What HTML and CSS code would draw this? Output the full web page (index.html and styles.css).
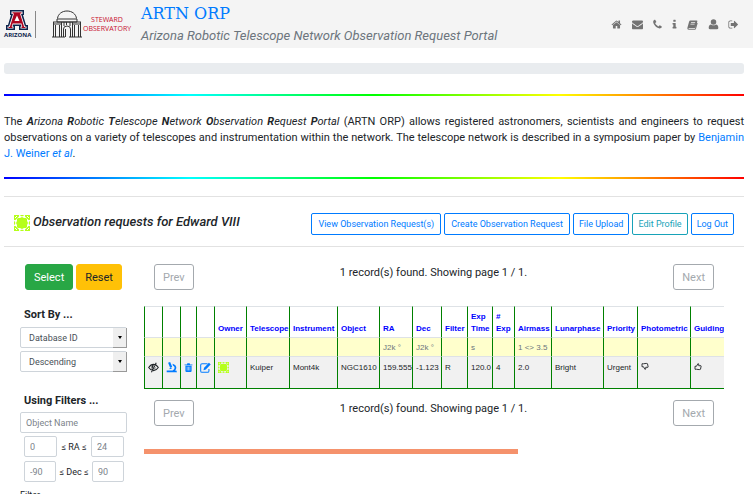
FILE: index.html
```html
<!DOCTYPE html>
<html lang="en">
<head>
<meta charset="utf-8">
<title>ARTN ORP</title>
<link rel="stylesheet" href="styles.css">
</head>
<body>
<svg class="defs" aria-hidden="true">
  <symbol id="identicon" viewBox="0 0 16 16">
    <path fill="#b5ff1a" d="M0 0h5v1.500L1.500 5H0zM16 0h-5v1.500L14.500 5H16zM0 16h5v-1.500L1.500 11H0zM16 16h-5v-1.500l3.500-3.500H16zM5.500 0L8 1.500 10.500 0zM5.500 16L8 14.500l2.500 1.500zM0 5.500L1.500 8 0 10.500zM16 5.500L14.500 8l1.500 2.500z"/>
    <path fill="#b5ff1a" d="M8 2l2 1h2l1 1v2l1 2-1 2v2l-1 1h-2l-2 1-2-1H4l-1-1v-2L2 8l1-2V4l1-1h2z"/>
    <path fill="#fff" d="M1 2h1v1H1zM2 1h1v1H2zM13 1h1v1h-1zM14 2h1v1h-1zM1 13h1v1H1zM2 14h1v1H2zM13 14h1v1h-1zM14 13h1v1h-1z"/>
  </symbol>
</svg>
<header class="top">
  <svg class="logo-a" viewBox="0 0 26 28" role="img" aria-label="Arizona">
    <path fill="#0c234b" d="M6 0h14v5h-1l3 10h2v5h-9v-4h-4v4H2v-5h2L7 5H6z"/>
    <path fill="#fff" d="M7.500 1.500h11v2.500h-1.500l4 12.500h1.500v2h-6v-2h1l-.5-2h-8l-.5 2h1v2h-6v-2H5L9 4H7.500z"/>
    <path fill="#ab0520" d="M8.500 2.200h9v1.400H16l4.200 13.400h1.300v1h-4v-1h.8l-.9-3.500H8.600L7.700 17h.8v1h-4v-1h1.300L10 3.600H8.500zM13 5.500L10.500 11h5z"/>
    <text x="0" y="27" class="logo-word" fill="#0c234b">ARIZONA</text>
  </svg>
  <span class="rule"></span>
  <svg class="dome" viewBox="0 0 30 28" fill="none" stroke="#333" stroke-width="1" aria-hidden="true">
    <path d="M5.500 8.500C6 4 10 1 15 1s9 3 9.500 7.500M5 9h20v3H5zM1 12h28M1 14h8M21 14h8M1.500 12v15M3.500 15v12M7.500 15v12M9.500 12v15M20.500 12v15M22.500 15v12M26.500 15v12M28.500 12v15M0 27h10M20 27h10M11.500 27v-8q0-3 3.500-3t3.500 3v8M13.500 19v8M10 27h3M17 27h3M12 12v4M18 12v4M14.500 12v3"/>
  </svg>
  <span class="steward">STEWARD<br>OBSERVATORY</span>
  <div class="brand">
    <a href="#" class="brand-name">ARTN ORP</a>
    <em class="brand-sub">Arizona Robotic Telescope Network Observation Request Portal</em>
  </div>
  <nav class="icons">
    <a href="#" aria-label="Home"><svg viewBox="0 0 1792 1792"><path d="M1472 992v480q0 26-19 45t-45 19h-384v-384h-256v384h-384q-26 0-45-19t-19-45v-480q0-1 .5-3t.5-3l575-474 575 474q1 2 1 6zm223-69l-62 74q-8 9-21 11h-3q-13 0-21-7l-692-577-692 577q-12 8-24 7-13-2-21-11l-62-74q-8-10-7-23.500t11-21.500l719-599q32-26 76-26t76 26l244 204v-195q0-14 9-23t23-9h192q14 0 23 9t9 23v408l219 182q10 8 11 21.500t-7 23.500z"/></svg></a>
    <a href="#" aria-label="Mail"><svg viewBox="0 0 1792 1792"><path d="M1792 710v794q0 66-47 113t-113 47h-1472q-66 0-113-47t-47-113v-794q44 49 101 87 362 246 497 345 57 42 92.500 65.500t94.500 48 110 24.500h2q51 0 110-24.500t94.500-48 92.500-65.500q170-123 498-345 57-39 100-87zm0-294q0 79-49 151t-122 123q-376 261-468 325-10 7-42.500 31t-54 38.500-52 32.500-57.500 27-50 9h-2q-23 0-50-9t-57.500-27-52-32.500-54-38.500-42.500-31q-91-64-262-182.500t-205-142.500q-62-42-117-115.500t-55-136.500q0-78 41.500-130t118.500-52h1472q65 0 112.500 47t47.500 113z"/></svg></a>
    <a href="#" aria-label="Phone" class="narrow"><svg viewBox="0 0 1792 1792"><path d="M1600 1240q0 27-10 70.500t-21 68.500q-21 50-122 106-94 51-186 51-27 0-52.500-3.500t-57.500-12.500-47.500-14.500-55.500-20.500-49-18q-98-35-175-83-128-79-264.500-215.500t-215.500-264.500q-48-77-83-175-3-9-18-49t-20.500-55.500-14.500-47.500-12.500-57.500-3.500-52.500q0-92 51-186 56-101 106-122 25-11 68.500-21t70.500-10q14 0 21 3 18 6 53 76 11 19 30 54t35 63.500 31 53.500q3 4 17.500 25t21.500 35.500 7 28.500q0 20-28.500 50t-62 55-62 53-28.500 46q0 9 5 22.500t8.500 20.500 14 24 11.500 19q76 137 174 235t235 174q2 1 19 11.500t24 14 20.500 8.500 22.500 5q18 0 46-28.500t53-62 55-62 50-28.500q14 0 28.500 7t35.500 21.500 25 17.500q25 15 53.500 31t63.500 35 54 30q70 35 76 53 3 7 3 21z"/></svg></a>
    <a href="#" aria-label="Info" class="thin"><svg viewBox="0 0 1792 1792"><path d="M1216 1344v128q0 26-19 45t-45 19h-512q-26 0-45-19t-19-45v-128q0-26 19-45t45-19h64v-384h-64q-26 0-45-19t-19-45v-128q0-26 19-45t45-19h384q26 0 45 19t19 45v576h64q26 0 45 19t19 45zm-128-1152v192q0 26-19 45t-45 19h-256q-26 0-45-19t-19-45v-192q0-26 19-45t45-19h256q26 0 45 19t19 45z"/></svg></a>
    <a href="#" aria-label="Manual"><svg viewBox="0 0 16 16"><path fill-rule="evenodd" d="M5 2h9q1.500 0 1 1.500l-2.500 8.500q-.4 1-1.500 1H3q-1 0-1 .7t1 .6h8.700l2.800-9 1 .8L13 14.500q-.4 1-1.500 1H2.500Q0 15.500.5 13L3 4q.5-2 2-2zm1 2.500l-.3 1h6l.3-1zm-.8 2.500l-.3 1h6l.3-1z"/></svg></a>
    <a href="#" aria-label="User"><svg viewBox="0 0 16 16"><circle cx="8" cy="4.500" r="4"/><path d="M4.500 8Q8 10.500 11.500 8 15 8.500 15 13q0 2-2 2H3q-2 0-2-2 0-4.500 3.500-5z"/></svg></a>
    <a href="#" aria-label="Sign out" class="narrow"><svg viewBox="0 0 1792 1792"><path d="M704 1440q0 4 1 20t.5 26.500-3 23.500-10 19.500-20.500 6.500h-320q-119 0-203.500-84.500t-84.500-203.500v-704q0-119 84.500-203.500t203.500-84.500h320q13 0 22.500 9.500t9.500 22.500q0 4 1 20t.5 26.500-3 23.500-10 19.500-20.500 6.500h-320q-66 0-113 47t-47 113v704q0 66 47 113t113 47h312l11.500 1 11.500 3 8 5.500 7 9 2 13.500zm928-544q0 26-19 45l-544 544q-19 19-45 19t-45-19-19-45v-288h-448q-26 0-45-19t-19-45v-384q0-26 19-45t45-19h448v-288q0-26 19-45t45-19 45 19l544 544q19 19 19 45z"/></svg></a>
  </nav>
</header>
<main>
  <div class="bar"></div>
  <div class="rainbow"></div>
  <p class="intro">The <em><b>A</b>rizona <b>R</b>obotic <b>T</b>elescope <b>N</b>etwork <b>O</b>bservation <b>R</b>equest <b>P</b>ortal</em> (ARTN ORP) allows registered astronomers, scientists and engineers to request observations on a variety of telescopes and instrumentation within the network. The telescope network is described in a symposium paper by <a href="#">Benjamin J. Weiner <em>et al</em></a>.</p>
  <div class="rainbow"></div>
  <section class="heading">
    <svg class="avatar"><use href="#identicon"/></svg>
    <h1>Observation requests for Edward VIII</h1>
    <div class="actions">
      <button type="button" class="roomy">View Observation Request(s)</button>
      <button type="button" class="roomy">Create Observation Request</button>
      <button type="button">File Upload</button>
      <button type="button" class="teal">Edit Profile</button>
      <button type="button">Log Out</button>
    </div>
  </section>
  <div class="columns">
    <form class="side">
      <div class="submit">
        <button type="button" class="btn green">Select</button>
        <button type="reset" class="btn amber">Reset</button>
      </div>
      <h2>Sort By ...</h2>
      <div class="pick"><select aria-label="Sort field"><option>Database ID</option></select></div>
      <div class="pick"><select aria-label="Sort order"><option>Descending</option></select></div>
      <h2 class="second">Using Filters ...</h2>
      <input class="field" type="text" aria-label="Object name" placeholder="Object Name">
      <div class="range">
        <input class="field" type="text" aria-label="Minimum RA" placeholder="0"><span>≤ RA ≤</span><input class="field" type="text" aria-label="Maximum RA" placeholder="24">
      </div>
      <div class="range dec">
        <input class="field" type="text" aria-label="Minimum Dec" placeholder="-90"><span>≤ Dec ≤</span><input class="field" type="text" aria-label="Maximum Dec" placeholder="90">
      </div>
      <p class="label">Filter</p>
    </form>
    <section class="results">
      <div class="pager">
        <button type="button" class="btn grey" disabled>Prev</button>
        <span>1 record(s) found. Showing page 1 / 1.</span>
        <button type="button" class="btn grey" disabled>Next</button>
      </div>
      <div class="scroll">
        <table>
          <colgroup>
            <col class="w18"><col class="w18"><col class="w16"><col class="w18"><col class="w32"><col class="w43"><col class="w48"><col class="w42"><col class="w33"><col class="w29"><col class="w26"><col class="w25"><col class="w22"><col class="w37"><col class="w52"><col class="w34"><col class="w53"><col class="w48">
          </colgroup>
          <thead>
            <tr><th></th><th></th><th></th><th></th><th>Owner</th><th>Telescope</th><th>Instrument</th><th>Object</th><th>RA</th><th>Dec</th><th>Filter</th><th>Exp<br>Time</th><th>#<br>Exp</th><th>Airmass</th><th>Lunarphase</th><th>Priority</th><th>Photometric</th><th>Guiding</th></tr>
          </thead>
          <tbody>
            <tr class="units"><td></td><td></td><td></td><td></td><td></td><td></td><td></td><td></td><td>J2k °</td><td>J2k °</td><td></td><td>s</td><td></td><td>1 &lt;&gt; 3.5</td><td></td><td></td><td></td><td></td></tr>
            <tr class="record">
              <td><svg class="ic dark" viewBox="0 0 16 16"><path fill="none" stroke="currentColor" stroke-width="1.600" d="M1 8q3-4.500 7-4.500T15 8q-3 4.500-7 4.500T1 8zM12 1L5 15"/><path fill="currentColor" d="M5 7q0-3 3.500-3L6 11q-1-1-1-4zM11 7l-2.500 4q3-1 2.500-4z"/></svg></td>
              <td><svg class="ic" viewBox="0 0 16 16"><path fill="currentColor" d="M3 1l3-1 3 7-3 1.500zM5 9l3-1 .5 1.500-3 1zM9.500 2.500Q15 4 15 8.500 15 11 13 12.500h2l1 2.500H1v-2.500h8.500q3-1.500 3-4t-2.500-3.500z"/></svg></td>
              <td><svg class="ic slim" viewBox="0 0 16 16"><path fill="currentColor" fill-rule="evenodd" d="M1 2.500h4L6 .5h4l1 2h4V4H1zM2.500 5h11v9q0 2-2 2h-7q-2 0-2-2zM5 6.500v7h1v-7zm2.500 0v7h1v-7zm2.500 0v7h1v-7z"/></svg></td>
              <td><svg class="ic" viewBox="0 0 16 16"><path fill="none" stroke="currentColor" stroke-width="1.500" d="M11 2.500H3q-2 0-2 2V13q0 2 2 2h8q2 0 2-2v-3"/><path fill="currentColor" d="M13 1l2.500 2.500L8.500 11 5 12l1-3.500z"/></svg></td>
              <td><svg class="ic"><use href="#identicon"/></svg></td>
              <td>Kuiper</td><td>Mont4k</td><td>NGC1610</td><td>159.555</td><td>-1.123</td><td>R</td><td>120.0</td><td>4</td><td>2.0</td><td>Bright</td><td>Urgent</td>
              <td><svg class="thumb down" viewBox="0 0 16 16"><path fill="none" stroke="currentColor" stroke-width="1.800" d="M2 7.500h3L8 2q2 0 1.500 4.500H14q1 1 0 2l-1 5Q12 15 5 13.500H2z"/></svg></td>
              <td><svg class="thumb" viewBox="0 0 16 16"><path fill="none" stroke="currentColor" stroke-width="1.800" d="M2 7.500h3L8 2q2 0 1.500 4.500H14q1 1 0 2l-1 5Q12 15 5 13.500H2z"/></svg></td>
            </tr>
          </tbody>
        </table>
      </div>
      <div class="pager">
        <button type="button" class="btn grey" disabled>Prev</button>
        <span>1 record(s) found. Showing page 1 / 1.</span>
        <button type="button" class="btn grey" disabled>Next</button>
      </div>
      <div class="track"><div class="thumbbar"></div></div>
    </section>
  </div>
</main>
</body>
</html>
```
FILE: styles.css
```css
* { box-sizing: border-box; }
body {
  margin: 0;
  height: 100vh;
  overflow: hidden;
  background: #fff;
  color: #212529;
  font: 11px/16px Roboto, sans-serif;
}
a { color: #007bff; text-decoration: none; }
button, input, select { font-family: inherit; margin: 0; }
.defs { position: absolute; width: 0; height: 0; }

.top {
  display: flex;
  align-items: center;
  height: 48px;
  padding: 0 15px 0 4px;
  background: #f4f4f4;
}
.logo-a { width: 26px; height: 28px; flex: none; overflow: visible; }
.logo-word { font: bold 6px "Open Sans", sans-serif; }
.rule { width: 1px; height: 27px; margin: 0 16px 0 5px; background: #888; }
.dome { width: 30px; height: 28px; flex: none; }
.steward {
  margin-left: 1px;
  width: 48px;
  color: #c8102e;
  font: 7px/9px "Open Sans", sans-serif;
  text-align: center;
  white-space: nowrap;
}
.brand { margin-left: 10px; display: flex; flex-direction: column; white-space: nowrap; }
.brand-name { font: 16px/24px "DejaVu Serif", serif; }
.brand-sub { font-size: 13px; line-height: 20px; color: #6c757d; }
.icons { display: flex; align-items: center; gap: 10px; margin-left: auto; }
.icons a { width: 11px; height: 11px; display: flex; justify-content: center; color: #737373; }
.icons .narrow { width: 9px; }
.icons .thin { width: 5px; }
.icons svg { width: 11px; height: 11px; flex: none; fill: currentColor; }

main { padding: 15px 9px 0 4px; }
.bar { height: 11px; border-radius: 3px; background: #e9ecef; }
.rainbow {
  height: 2px;
  background: linear-gradient(to right, #00f, #0ff, #0f0, #ff0, #f00);
}
.bar + .rainbow { margin-top: 20px; }
.intro { margin: 18px 0 15px; text-align: justify; }

.heading {
  display: flex;
  align-items: center;
  height: 51px;
  margin-top: 17px;
  padding: 0 10px;
  border-top: 1px solid #e2e2e2;
  border-bottom: 1px solid #e2e2e2;
}
.avatar { width: 16px; height: 16px; margin-top: 3px; flex: none; }
h1 { margin: 0 0 0 3px; font-size: 13px; font-style: italic; font-weight: 500; white-space: nowrap; }
.actions { display: flex; gap: 3px; margin: 4px 0 0 auto; }
.actions button {
  height: 22px;
  padding: 0 5px;
  border: 1px solid #007bff;
  border-radius: 2px;
  background: #fff;
  color: #007bff;
  font-size: 9px;
  white-space: nowrap;
}
.actions .roomy { padding: 0 6px; }
.actions .teal { border-color: #17a2b8; color: #17a2b8; }

.columns { display: flex; align-items: flex-start; padding: 17px 20px 0 16px; gap: 17px; }
.side { width: 107px; flex: none; }
.btn { height: 26px; border: 1px solid; border-radius: 3px; padding: 0 8px; font-size: 11px; }
.submit { display: flex; gap: 3px; padding-left: 5px; }
.green { background: #28a745; border-color: #28a745; color: #fff; }
.amber { background: #ffc107; border-color: #ffc107; color: #212529; }
.grey { background: #fff; border-color: #a4a9ae; color: #a4a9ae; }
h2 { margin: 17px 0 4px 4px; font-size: 11px; line-height: 16px; font-weight: 700; }
.second { margin: 21px 0 3px 4px; }
.pick { position: relative; margin-bottom: 3px; }
.pick select {
  display: block;
  width: 100%;
  height: 21px;
  padding: 0 8px;
  border: 1px solid #ced4da;
  border-radius: 2px;
  background: #fff;
  color: #495057;
  font-size: 9px;
  appearance: none;
}
.pick::before {
  content: "";
  position: absolute;
  top: 1px;
  right: 0;
  width: 13px;
  height: 19px;
  background: #efefef;
  border: solid #999;
  border-width: 0 1px 1px 0;
  pointer-events: none;
}
.pick::after {
  content: "";
  position: absolute;
  top: 9px;
  right: 5px;
  border: 2px solid transparent;
  border-top: 3px solid #000;
  border-bottom: 0;
  pointer-events: none;
}
.field {
  display: block;
  width: 100%;
  height: 21px;
  padding: 0 5px;
  border: 1px solid #ced4da;
  border-radius: 2px;
  font-size: 9px;
}
.field::placeholder { color: #7b838a; opacity: 1; }
.range {
  display: flex;
  align-items: center;
  justify-content: space-between;
  margin: 3px 3px 4px 4px;
  font-size: 9px;
}
.range .field { width: 33px; }
.dec .field { width: 32px; }
.label { margin: 5px 0 0; font-size: 9px; }

.results { flex: 1; min-width: 0; }
.pager { display: flex; justify-content: space-between; padding: 0 10px; }
.pager span { line-height: 18px; }
.scroll { overflow: hidden; margin: 16px 0 11px; }
table {
  table-layout: fixed;
  width: 594px;
  border-spacing: 0;
  border-bottom: 1px solid green;
  font: 8px/12px "Liberation Sans", sans-serif;
  white-space: nowrap;
}
.w16 { width: 16px; }
.w18 { width: 18px; }
.w22 { width: 22px; }
.w25 { width: 25px; }
.w26 { width: 26px; }
.w29 { width: 29px; }
.w32 { width: 32px; }
.w33 { width: 33px; }
.w34 { width: 34px; }
.w37 { width: 37px; }
.w42 { width: 42px; }
.w43 { width: 43px; }
.w48 { width: 48px; }
.w52 { width: 52px; }
.w53 { width: 53px; }
th, td {
  padding: 3px 0 3px 3px;
  border-left: 1px solid green;
  border-top: 1px solid #dee2e6;
  text-align: left;
  vertical-align: top;
}
th { padding: 4px 0 2px 3px; color: #00f; vertical-align: bottom; }
.units td { height: 19px; padding-top: 4px; background: #ffc; color: #6c757d; }
.units { line-height: 11px; }
.record td { height: 32px; padding-top: 5px; background: #f1f1f1; }
.ic { display: block; width: 11px; height: 11px; color: #007bff; }
.slim { width: 9px; }
.dark { color: #212529; }
.thumb { display: block; width: 8px; height: 9px; }
.down { transform: scaleY(-1); }
.track { margin-top: 23px; }
.thumbbar { width: 64.5%; height: 5px; background: #f5926c; }
```
